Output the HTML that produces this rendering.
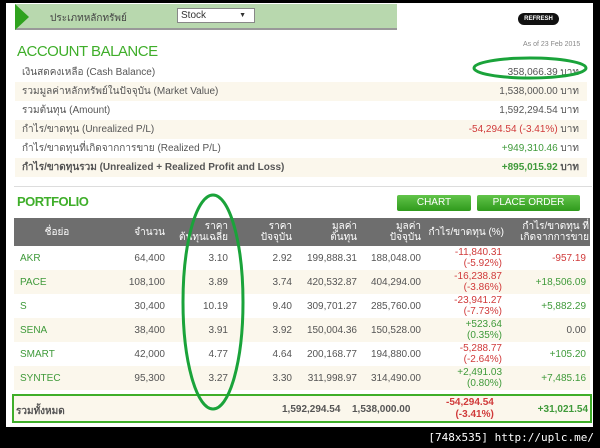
<!DOCTYPE html>
<html><head><meta charset="utf-8"><style>
*{margin:0;padding:0;box-sizing:border-box}
body{width:600px;height:448px;background:#000;position:relative;overflow:hidden;font-family:"Liberation Sans","Noto Sans CJK SC",sans-serif;font-size:10px;color:#555}
#page{position:absolute;left:6px;top:3px;width:587px;height:424px;background:#fff}
.abs{position:absolute}
.row{position:absolute;width:572px;height:19px;line-height:19px;padding-left:7px}
.row .v{position:absolute;right:8px;top:0}
.cream{background:#fbf7ec}
.g{color:#3f9a3a}.r{color:#d03a3a}
table{position:absolute;left:14px;top:218px;width:576px;border-collapse:collapse;font-size:10px;table-layout:fixed}
th{background:#6e6e6e;color:#fff;font-weight:normal;height:28px;line-height:11px;text-align:right;padding-right:4px;white-space:nowrap}
td{height:24px;text-align:right;padding-right:4px;line-height:11px;color:#555;white-space:nowrap}
td:first-child{text-align:left;padding-left:6px;color:#3f9a3a}
tr.c td{background:#fbf7ec}
.btn{position:absolute;height:16px;line-height:16px;color:#fff;font-size:10px;text-align:center;background:linear-gradient(#62c44a,#2f9a1c);border-radius:2px}
</style></head><body>
<div id="page">
<div class="abs" style="left:9px;top:1px;width:382px;height:26px;background:#b8d8ae;border-bottom:2px solid #999"></div>
<div class="abs" style="left:9px;top:1px;width:0;height:0;border-top:13px solid transparent;border-bottom:13px solid transparent;border-left:14px solid #2fa21e"></div>
<div class="abs" style="left:44px;top:8px;font-size:10px;color:#444">ประเภทหลักทรัพย์</div>
<div class="abs" style="left:171px;top:5px;width:78px;height:15px;background:#fff;border:1px solid #888;font-size:10px;line-height:13px;padding-left:3px;color:#333">Stock<span style="position:absolute;right:8px;font-size:7px">▼</span></div>
<div class="abs" style="left:512px;top:10px;width:41px;height:12px;background:#111;border-radius:7px;color:#fff;font-size:6px;font-weight:bold;text-align:center;line-height:12px">REFRESH</div>
<div class="abs" style="left:11px;top:40px;font-size:15px;color:#3fae2a;letter-spacing:-0.5px">ACCOUNT BALANCE</div>
<div class="abs" style="left:517px;top:38px;font-size:7px;color:#888">As of 23 Feb 2015</div>
<div class="row" style="top:60px;left:9px">เงินสดคงเหลือ (Cash Balance)<span class="v">358,066.39 บาท</span></div>
<div class="row cream" style="top:79px;left:9px">รวมมูลค่าหลักทรัพย์ในปัจจุบัน (Market Value)<span class="v">1,538,000.00 บาท</span></div>
<div class="row" style="top:98px;left:9px">รวมต้นทุน (Amount)<span class="v">1,592,294.54 บาท</span></div>
<div class="row cream" style="top:117px;left:9px">กำไร/ขาดทุน (Unrealized P/L)<span class="v"><span class="r">-54,294.54 (-3.41%)</span> บาท</span></div>
<div class="row" style="top:136px;left:9px">กำไร/ขาดทุนที่เกิดจากการขาย (Realized P/L)<span class="v"><span class="g">+949,310.46</span> บาท</span></div>
<div class="row cream" style="top:155px;left:9px;font-weight:bold">กำไร/ขาดทุนรวม (Unrealized + Realized Profit and Loss)<span class="v"><span class="g">+895,015.92</span> บาท</span></div>
<div class="abs" style="left:8px;top:183px;width:578px;height:1px;background:#ddd"></div>
<div class="abs" style="left:11px;top:191px;font-size:13px;font-weight:bold;color:#3fae2a;letter-spacing:-0.5px">PORTFOLIO</div>
<div class="btn" style="left:391px;top:192px;width:74px">CHART</div>
<div class="btn" style="left:471px;top:192px;width:103px">PLACE ORDER</div>
</div>
<table>
<colgroup><col style="width:86px"><col style="width:69px"><col style="width:63px"><col style="width:64px"><col style="width:65px"><col style="width:64px"><col style="width:81px"><col style="width:84px"></colgroup>
<tr><th style="text-align:center;padding:0">ชื่อย่อ</th><th>จำนวน</th><th>ราคา<br>ต้นทุนเฉลี่ย</th><th>ราคา<br>ปัจจุบัน</th><th>มูลค่า<br>ต้นทุน</th><th>มูลค่า<br>ปัจจุบัน</th><th style="text-align:right;padding-right:2px">กำไร/ขาดทุน (%)</th><th style="text-align:right;padding-right:1px">กำไร/ขาดทุน ที่<br>เกิดจากการขาย</th></tr>
<tr><td>AKR</td><td>64,400</td><td>3.10</td><td>2.92</td><td>199,888.31</td><td>188,048.00</td><td style="color:#d03a3a">-11,840.31<br>(-5.92%)</td><td style="color:#d03a3a">-957.19</td></tr>
<tr class="c"><td>PACE</td><td>108,100</td><td>3.89</td><td>3.74</td><td>420,532.87</td><td>404,294.00</td><td style="color:#d03a3a">-16,238.87<br>(-3.86%)</td><td style="color:#3f9a3a">+18,506.09</td></tr>
<tr><td>S</td><td>30,400</td><td>10.19</td><td>9.40</td><td>309,701.27</td><td>285,760.00</td><td style="color:#d03a3a">-23,941.27<br>(-7.73%)</td><td style="color:#3f9a3a">+5,882.29</td></tr>
<tr class="c"><td>SENA</td><td>38,400</td><td>3.91</td><td>3.92</td><td>150,004.36</td><td>150,528.00</td><td style="color:#3f9a3a">+523.64<br>(0.35%)</td><td>0.00</td></tr>
<tr><td>SMART</td><td>42,000</td><td>4.77</td><td>4.64</td><td>200,168.77</td><td>194,880.00</td><td style="color:#d03a3a">-5,288.77<br>(-2.64%)</td><td style="color:#3f9a3a">+105.20</td></tr>
<tr class="c"><td>SYNTEC</td><td>95,300</td><td>3.27</td><td>3.30</td><td>311,998.97</td><td>314,490.00</td><td style="color:#3f9a3a">+2,491.03<br>(0.80%)</td><td style="color:#3f9a3a">+7,485.16</td></tr>
</table>
<div class="abs" style="left:12px;top:394px;width:580px;height:29px;background:#fbf7ec;border:2px solid #3fae2a;font-size:10px;font-weight:bold">
<span class="abs" style="left:2px;top:8px;color:#555">รวมทั้งหมด</span>
<span class="abs" style="left:268px;top:8px;color:#555">1,592,294.54</span>
<span class="abs" style="left:338px;top:8px;color:#555">1,538,000.00</span>
<span class="abs" style="left:432px;top:1px;color:#d03a3a;text-align:right;line-height:12px">-54,294.54<br>&nbsp;&nbsp;(-3.41%)</span>
<span class="abs" style="right:2px;top:8px;color:#3f9a3a">+31,021.54</span>
</div>
<svg class="abs" style="left:0;top:0" width="600" height="448"><ellipse cx="213" cy="302" rx="30" ry="107" fill="none" stroke="#1aa33a" stroke-width="3"/><ellipse cx="530" cy="68" rx="56" ry="10" fill="none" stroke="#1aa33a" stroke-width="3"/></svg>
<div class="abs" style="right:6px;top:431px;color:#fff;font-family:'DejaVu Sans Mono',monospace;font-size:11px">[748x535] http://uplc.me/</div>
</body></html>
